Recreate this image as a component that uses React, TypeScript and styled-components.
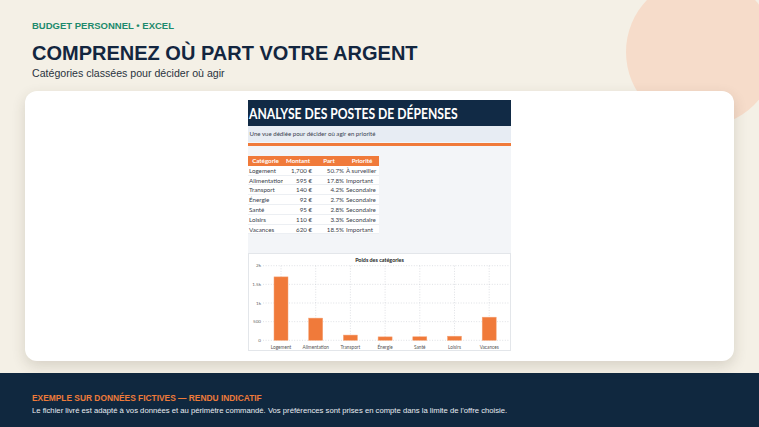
import React from "react";
import styled, { createGlobalStyle } from "styled-components";

const Global = createGlobalStyle`
  html, body { margin: 0; padding: 0; background: #f4f0e6; }
  body { width: 759px; height: 427px; overflow: hidden; }
  * { box-sizing: border-box; }
`;

const Page = styled.div`
  position: relative;
  width: 759px;
  height: 427px;
  overflow: hidden;
  background: #f4f0e6;
  display: flex;
  flex-direction: column;
  font-family: "Liberation Sans", Arial, sans-serif;
`;

const Blob = styled.div`
  position: absolute;
  left: 626px;
  top: -23px;
  width: 150px;
  height: 150px;
  border-radius: 50%;
  background: #f6dcca;
`;

const Header = styled.header`
  position: relative;
  padding: 20px 32px 0;
  display: flex;
  flex-direction: column;
`;

const Eyebrow = styled.div`
  font-size: 9.5px;
  line-height: 11.5px;
  font-weight: 700;
  color: #1d8a6c;
`;

const Title = styled.h1`
  margin: 9px 0 0;
  font-size: 20px;
  line-height: 24px;
  font-weight: 700;
  color: #13263f;
`;

const Subtitle = styled.p`
  margin: 2.5px 0 0;
  font-size: 10.6px;
  line-height: 13px;
  color: #2a3340;
`;

const Card = styled.section`
  position: relative;
  margin: 11px 25px 0;
  height: 270px;
  background: #ffffff;
  border-radius: 12px;
  box-shadow: 0 5px 14px rgba(60, 50, 30, 0.16);
  padding-top: 9px;
  display: flex;
  justify-content: center;
  align-items: flex-start;
`;

const Sheet = styled.div`
  width: 263px;
  height: 251px;
  background: #f3f5f8;
  display: flex;
  flex-direction: column;
  font-family: Lato, "Open Sans", sans-serif;
  overflow: hidden;
`;

const SheetHeader = styled.div`
  height: 26px;
  background: #112a45;
  padding-left: 1px;
  overflow: hidden;
`;

const SheetTitle = styled.div`
  color: #ffffff;
  font-weight: 700;
  font-size: 14.8px;
  line-height: 27px;
  white-space: nowrap;
  transform: scaleX(0.82);
  transform-origin: left center;
`;

const SheetSub = styled.div`
  height: 16px;
  background: #e7ecf3;
  color: #3a4250;
  font-size: 6.1px;
  line-height: 16px;
  padding-left: 1.5px;
  white-space: nowrap;
`;

const Accent = styled.div`
  height: 2.6px;
  margin-top: 1.2px;
  background: #f07a3a;
`;

const Table = styled.div`
  width: 131px;
  margin-top: 10px;
  display: flex;
  flex-direction: column;
  font-size: 6.2px;
  color: #3a414b;
`;

const Row = styled.div<{ $head?: boolean }>`
  display: grid;
  grid-template-columns: 35px 30px 32px 34px;
  height: ${(p) => (p.$head ? "10px" : "9.8px")};
  line-height: ${(p) => (p.$head ? "10px" : "9.8px")};
  background: ${(p) => (p.$head ? "#f07a3a" : "#ffffff")};
  color: ${(p) => (p.$head ? "#ffffff" : "#3a414b")};
  font-weight: ${(p) => (p.$head ? 700 : 400)};
  border-bottom: ${(p) => (p.$head ? "none" : "0.6px solid #eceff3")};
`;

const Cell = styled.div<{ $align?: "left" | "right" | "center" }>`
  text-align: ${(p) => p.$align || "left"};
  white-space: nowrap;
  overflow: hidden;
  padding: 0 1px;
`;

const ChartPanel = styled.div`
  margin-top: auto;
  height: 98px;
  background: #ffffff;
  box-shadow: inset 0 0 0 1px #e3e6ea;
`;

const Footer = styled.footer`
  margin-top: auto;
  height: 54px;
  background: #10283f;
  padding: 20px 32px 0;
  display: flex;
  flex-direction: column;
  gap: 3px;
`;

const FootTitle = styled.div`
  font-size: 8.4px;
  line-height: 10px;
  font-weight: 700;
  color: #ee7b3a;
`;

const FootText = styled.div`
  font-size: 7.7px;
  line-height: 10px;
  color: #e8ecf1;
`;

const rows = [
  ["Logement", "1,700 €", "50.7%", "À surveiller"],
  ["Alimentation", "595 €", "17.8%", "Important"],
  ["Transport", "140 €", "4.2%", "Secondaire"],
  ["Énergie", "92 €", "2.7%", "Secondaire"],
  ["Santé", "95 €", "2.8%", "Secondaire"],
  ["Loisirs", "110 €", "3.3%", "Secondaire"],
  ["Vacances", "620 €", "18.5%", "Important"],
];

const chartData: [string, number][] = [
  ["Logement", 1700],
  ["Alimentation", 595],
  ["Transport", 140],
  ["Énergie", 92],
  ["Santé", 95],
  ["Loisirs", 110],
  ["Vacances", 620],
];

const Chart: React.FC = () => {
  const base = 87.3;
  const top = 12.7;
  const scale = (base - top) / 2000;
  const ticks = [
    [2000, "2k"],
    [1500, "1.5k"],
    [1000, "1k"],
    [500, "500"],
    [0, "0"],
  ] as const;
  const cx = (i: number) => 33 + i * 34.7;
  return (
    <svg width="263" height="98" viewBox="0 0 263 98" style={{ display: "block" }}>
      <text
        x="131.5"
        y="8.6"
        textAnchor="middle"
        fontSize="5.4"
        fontWeight="700"
        fill="#222"
        fontFamily="Lato, sans-serif"
      >
        Poids des catégories
      </text>
      {ticks.map(([v, l]) => {
        const y = base - v * scale;
        return (
          <g key={l}>
            <line x1="15" x2="261" y1={y} y2={y} stroke="#c9cdd3" strokeWidth="0.6" strokeDasharray="1 1.6" />
            <text x="13" y={y + 1.7} textAnchor="end" fontSize="4.6" fill="#666" fontFamily="Lato, sans-serif">
              {l}
            </text>
          </g>
        );
      })}
      {chartData.map((_, i) => (
        <line
          key={"v" + i}
          x1={cx(i)}
          x2={cx(i)}
          y1={top}
          y2={base}
          stroke="#c9cdd3"
          strokeWidth="0.6"
          strokeDasharray="1 1.6"
        />
      ))}
      {chartData.map(([name, v], i) => {
        const h = v * scale;
        return (
          <g key={name}>
            <rect x={cx(i) - 7} y={base - h} width="14" height={h} fill="#f07a3a" stroke="#f6a477" strokeWidth="0.5" />
            <text x={cx(i)} y="95.8" textAnchor="middle" fontSize="4.7" fill="#555" fontFamily="Lato, sans-serif">
              {name}
            </text>
          </g>
        );
      })}
    </svg>
  );
};

export default function App() {
  return (
    <Page>
      <Global />
      <Blob />
      <Header>
        <Eyebrow>BUDGET PERSONNEL • EXCEL</Eyebrow>
        <Title>COMPRENEZ OÙ PART VOTRE ARGENT</Title>
        <Subtitle>Catégories classées pour décider où agir</Subtitle>
      </Header>
      <Card>
        <Sheet>
          <SheetHeader>
            <SheetTitle>ANALYSE DES POSTES DE DÉPENSES</SheetTitle>
          </SheetHeader>
          <SheetSub>Une vue dédiée pour décider où agir en priorité</SheetSub>
          <Accent />
          <Table>
            <Row $head>
              <Cell $align="center">Catégorie</Cell>
              <Cell $align="center">Montant</Cell>
              <Cell $align="center">Part</Cell>
              <Cell $align="center">Priorité</Cell>
            </Row>
            {rows.map((r) => (
              <Row key={r[0]}>
                <Cell>{r[0]}</Cell>
                <Cell $align="right">{r[1]}</Cell>
                <Cell $align="right">{r[2]}</Cell>
                <Cell>{r[3]}</Cell>
              </Row>
            ))}
          </Table>
          <ChartPanel>
            <Chart />
          </ChartPanel>
        </Sheet>
      </Card>
      <Footer>
        <FootTitle>EXEMPLE SUR DONNÉES FICTIVES — RENDU INDICATIF</FootTitle>
        <FootText>
          Le fichier livré est adapté à vos données et au périmètre commandé. Vos préférences sont prises en compte dans la
          limite de l'offre choisie.
        </FootText>
      </Footer>
    </Page>
  );
}
